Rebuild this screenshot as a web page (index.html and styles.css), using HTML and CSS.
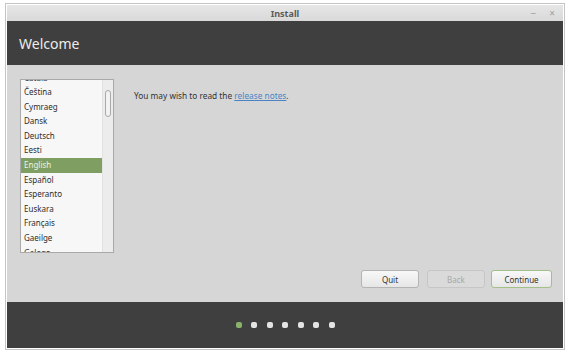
FILE: index.html
```html
<!DOCTYPE html>
<html lang="en">
<head>
    <meta charset="UTF-8">
    <title>Install</title>
    <link rel="stylesheet" href="styles.css">
</head>
<body>
    <div class="window">
        <!-- Title Bar -->
        <div class="titlebar">
            <span class="title">Install</span>
            <div class="controls">
                <span class="ctl">&minus;</span>
                <span class="ctl">&times;</span>
            </div>
        </div>

        <div class="header">Welcome</div>

        <div class="content">
            <div class="main">
                <div class="langlist">
                    <div class="items">
                        <div class="item">Català</div>
                        <div class="item">Čeština</div>
                        <div class="item">Cymraeg</div>
                        <div class="item">Dansk</div>
                        <div class="item">Deutsch</div>
                        <div class="item">Eesti</div>
                        <div class="item selected">English</div>
                        <div class="item">Español</div>
                        <div class="item">Esperanto</div>
                        <div class="item">Euskara</div>
                        <div class="item">Français</div>
                        <div class="item">Gaeilge</div>
                        <div class="item">Galego</div>
                    </div>
                    <div class="scrollbar"><div class="thumb"></div></div>
                </div>
                <p class="notes">You may wish to read the <a href="#">release notes</a>.</p>
            </div>
            <div class="buttons">
                <button class="btn">Quit</button>
                <button class="btn disabled">Back</button>
                <button class="btn primary">Continue</button>
            </div>
        </div>

        <!-- Progress dots -->
        <div class="footer">
            <span class="dot active"></span>
            <span class="dot"></span>
            <span class="dot"></span>
            <span class="dot"></span>
            <span class="dot"></span>
            <span class="dot"></span>
            <span class="dot"></span>
        </div>
    </div>
</body>
</html>
```

FILE: styles.css
```css
/* General Styles */
body {
    margin: 0;
    background-color: #ffffff;
    font-family: 'Noto Sans', 'DejaVu Sans', sans-serif;
}

.window {
    margin: 3px 5px 0 5px;
    width: 556px;
    height: 343px;
    border: 1px solid #c4c4c4;
    padding: 1px;
    display: flex;
    flex-direction: column;
}

/* Title Bar */
.titlebar {
    height: 16px;
    flex-shrink: 0;
    background: linear-gradient(#e6e6e6, #d9d9d9);
    position: relative;
    display: flex;
    align-items: center;
    justify-content: center;
}
.title {
    font-size: 9px;
    font-weight: bold;
    color: #5a5a5a;
}
.controls {
    position: absolute;
    right: 8px;
    top: 0;
    height: 16px;
    display: flex;
    align-items: center;
    gap: 13px;
}
.ctl {
    font-size: 10px;
    color: #a0a0a0;
}

.header {
    height: 44px;
    flex-shrink: 0;
    background-color: #3f3f3f;
    color: #ececec;
    font-size: 14px;
    padding-left: 12px;
    display: flex;
    align-items: center;
}

/* Content */
.content {
    flex: 1;
    background-color: #d6d6d6;
    display: flex;
    flex-direction: column;
    padding: 14px 11px 14px 13px;
}
.main {
    flex: 1;
    display: flex;
    align-items: flex-start;
}
.langlist {
    width: 92px;
    height: 172px;
    border: 1px solid #a9a9a9;
    background-color: #f7f7f7;
    display: flex;
    overflow: hidden;
}
.items {
    flex: 1;
    margin-top: -9.5px;
}
.item {
    height: 14.6px;
    line-height: 14.6px;
    font-size: 8px;
    color: #2e2e2e;
    padding-left: 3px;
}
.item.selected {
    background-color: #7f9f62;
    color: #eef3e8;
}
.scrollbar {
    width: 10px;
    border-left: 1px solid #e2e2e2;
    background-color: #ececec;
}
.thumb {
    margin: 10px 0 0 2px;
    width: 4px;
    height: 25px;
    border: 1px solid #a8a8a8;
    border-radius: 3px;
    background-color: #f2f2f2;
}
.notes {
    margin: 11px 0 0 20px;
    font-size: 8.3px;
    color: #333;
}
.notes a {
    color: #4a84c5;
    text-decoration: underline;
}

/* Buttons */
.buttons {
    display: flex;
    justify-content: flex-end;
    gap: 8px;
}
.btn {
    width: 58px;
    height: 18px;
    font-family: 'Noto Sans', 'DejaVu Sans', sans-serif;
    font-size: 8px;
    color: #333;
    background: linear-gradient(#f8f8f8, #e6e6e6);
    border: 1px solid #b4b4b4;
    border-radius: 3px;
    padding: 0;
}
.btn.disabled {
    color: #a8a8a8;
    background: #dadada;
    border-color: #c6c6c6;
}
.btn.primary {
    width: 61px;
    margin-left: -2px;
    border-color: #a3bf8a;
}

/* Footer */
.footer {
    height: 46px;
    flex-shrink: 0;
    background-color: #3f3f3f;
    display: flex;
    align-items: center;
    justify-content: center;
    gap: 9.5px;
}
.dot {
    width: 6px;
    height: 6px;
    border-radius: 2px;
    background-color: #e4e4e4;
}
.dot.active {
    background-color: #8bb26a;
}
```
